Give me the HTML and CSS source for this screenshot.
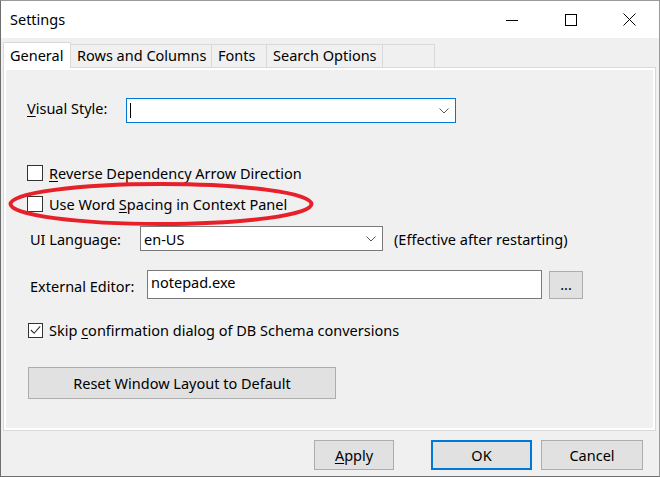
FILE: index.html
```html
<!DOCTYPE html>
<html>
<head>
<meta charset="utf-8">
<link rel="stylesheet" href="styles.css">
</head>
<body>
<div class="window">
  <div class="titlebar">
    <div class="title">Settings</div>
    <div class="caption">
      <div class="cbtn"><svg width="12" height="12" viewBox="0 0 12 12"><line x1="0" y1="6.5" x2="12" y2="6.5" stroke="#000" stroke-width="1"/></svg></div>
      <div class="cbtn"><svg width="12" height="12" viewBox="0 0 12 12"><rect x="0.5" y="0.5" width="11" height="11" fill="none" stroke="#000" stroke-width="1"/></svg></div>
      <div class="cbtn"><svg width="13" height="13" viewBox="0 0 13 13"><path d="M0.5 0.5 L12.5 12.5 M12.5 0.5 L0.5 12.5" stroke="#000" stroke-width="1"/></svg></div>
    </div>
  </div>

  <div class="tabs">
    <div class="tab sel t-general">General</div>
    <div class="tab t-rows">Rows and Columns</div>
    <div class="tab t-fonts">Fonts</div>
    <div class="tab t-search">Search Options</div>
    <div class="tab t-empty"></div>
  </div>

  <div class="panel">
    <div class="page">
      <div class="row r-visual">
        <div class="label l-visual"><u>V</u>isual Style:</div>
        <div class="combo focused c-visual">
          <span class="caret"></span>
          <svg class="chev" width="10" height="6" viewBox="0 0 10 6"><polyline points="0.5,0.5 5,5 9.5,0.5" fill="none" stroke="#555" stroke-width="1"/></svg>
        </div>
      </div>

      <div class="row check r-rev">
        <span class="box"></span>
        <span class="ctext"><u>R</u>everse Dependency Arrow Direction</span>
      </div>

      <div class="row check r-word">
        <span class="box"></span>
        <span class="ctext">Use Word <u>S</u>pacing in Context Panel</span>
      </div>

      <div class="row r-lang">
        <div class="label l-lang">UI Language:</div>
        <div class="combo c-lang">
          <span class="val">en-US</span>
          <svg class="chev" width="10" height="6" viewBox="0 0 10 6"><polyline points="0.5,0.5 5,5 9.5,0.5" fill="none" stroke="#555" stroke-width="1"/></svg>
        </div>
        <div class="note">(Effective after restarting)</div>
      </div>

      <div class="row r-editor">
        <div class="label l-editor">External Editor:</div>
        <div class="textbox">notepad.exe</div>
        <div class="btn dots">...</div>
      </div>

      <div class="row check r-skip">
        <span class="box">
          <svg width="14" height="14" viewBox="0 0 14 14"><polyline points="2,7 5.5,10.5 12,3" fill="none" stroke="#333" stroke-width="1.2"/></svg>
        </span>
        <span class="ctext">Skip <u>c</u>onfirmation dialog of DB Schema conversions</span>
      </div>

      <div class="row r-reset">
        <div class="btn reset">Reset Window Layout to Default</div>
      </div>

      <svg class="ellipse" width="310" height="48" viewBox="0 0 310 48"><ellipse cx="154" cy="23" rx="150.5" ry="20" fill="none" stroke="#e8202a" stroke-width="4"/></svg>
    </div>
  </div>

  <div class="footer">
    <div class="btn b-apply"><u>A</u>pply</div>
    <div class="btn b-ok">OK</div>
    <div class="btn b-cancel">Cancel</div>
  </div>
</div>
</body>
</html>
```

FILE: styles.css
```css
* { box-sizing: border-box; }
html, body { margin: 0; padding: 0; background: #f0f0f0; }
body {
  font-family: "Noto Sans", "Open Sans", sans-serif;
  font-size: 14.5px;
  color: #000;
  width: 660px;
  height: 477px;
  overflow: hidden;
}
u { text-decoration: underline; text-underline-offset: 2px; }

.window {
  width: 660px;
  height: 477px;
  background: #f0f0f0;
  border-left: 1px solid #6e6e6e;
  border-bottom: 1px solid #6e6e6e;
  border-right: 1px solid #9a9a9a;
  border-top: 1px solid #9a9a9a;
  display: flex;
  flex-direction: column;
}

.titlebar {
  height: 37px;
  background: #fff;
  display: flex;
  align-items: center;
  flex: none;
}
.title { padding-left: 9px; flex: 1; line-height: 37px; }
.caption { display: flex; height: 37px; }
.cbtn { width: 59px; height: 37px; display: flex; align-items: center; justify-content: center; }

.tabs {
  display: flex;
  align-items: flex-end;
  height: 29px;
  padding-left: 2px;
  flex: none;
  position: relative;
  z-index: 1;
}
.tab {
  height: 23px;
  border: 1px solid #d9d9d9;
  border-bottom: none;
  border-left: none;
  line-height: 21px;
  padding-left: 6px;
  background: #f0f0f0;
  white-space: nowrap;
}
.tab.sel {
  height: 26px;
  background: #fff;
  border-left: 1px solid #d9d9d9;
  padding-left: 6px;
  line-height: 24px;
  margin-bottom: -1px;
}
.t-general { width: 68px; }
.t-rows { width: 141px; }
.t-fonts { width: 55px; }
.t-search { width: 116px; }
.t-empty { width: 52px; }

.panel {
  margin-left: 2px;
  width: 653px;
  height: 364px;
  border: 1px solid #d9d9d9;
  background: #fff;
  padding: 2px;
  flex: none;
}
.page {
  position: relative;
  background: #f0f0f0;
  height: 100%;
  display: flex;
  flex-direction: column;
}

.row { display: flex; align-items: center; flex: none; }
.label { flex: none; }

.r-visual { margin-top: 28px; height: 25px; padding-left: 21px; }
.l-visual { width: 99px; padding-bottom: 6px; }
.combo {
  position: relative;
  height: 25px;
  background: #fff;
  border: 1px solid #7a7a7a;
  display: flex;
  align-items: center;
}
.combo.focused { border-color: #0078d7; }
.c-visual { width: 330px; }
.caret { display: block; width: 1px; height: 15px; background: #000; margin-left: 3px; }
.chev { position: absolute; right: 6px; top: 9px; }

.check { height: 16px; }
.box {
  width: 16px; height: 16px;
  border: 1px solid #333;
  background: #fff;
  flex: none;
  display: flex;
  align-items: center;
  justify-content: center;
}
.ctext { margin-left: 6px; white-space: nowrap; }
.r-rev { margin-top: 42px; padding-left: 21px; }
.r-word { margin-top: 15px; padding-left: 21px; }

.r-lang { margin-top: 14px; height: 25px; padding-left: 24px; }
.l-lang { width: 110px; }
.c-lang { width: 243px; }
.val { margin-left: 3px; }
.note { margin-left: 11px; white-space: nowrap; }

.r-editor { margin-top: 19px; height: 29px; padding-left: 24px; }
.l-editor { width: 117px; padding-top: 3px; }
.textbox {
  width: 395px;
  height: 29px;
  background: #fff;
  border: 1px solid #7a7a7a;
  padding-left: 3px;
  line-height: 22px;
}

.btn {
  background: #e1e1e1;
  border: 1px solid #adadad;
  display: flex;
  align-items: center;
  justify-content: center;
  white-space: nowrap;
}
.dots { width: 34px; height: 28px; margin-left: 7px; margin-top: 1px; line-height: 1; padding-bottom: 2px; }

.r-skip { margin-top: 23px; padding-left: 22px; }
.r-skip .box { width: 15px; height: 15px; }

.r-reset { margin-top: 29px; padding-left: 22px; }
.reset { width: 308px; height: 32px; }

.ellipse { position: absolute; left: 1px; top: 111px; }

.footer {
  display: flex;
  margin-top: 9px;
  padding-left: 313px;
}
.footer .btn { height: 30px; }
.b-apply { width: 80px; }
.b-ok { width: 101px; margin-left: 37px; border: 2px solid #0078d7; }
.b-cancel { width: 102px; margin-left: 9px; }
```
